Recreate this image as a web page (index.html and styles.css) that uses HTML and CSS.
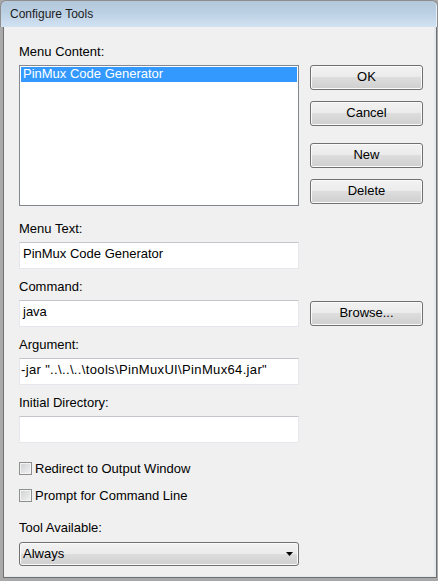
FILE: index.html
```html
<!DOCTYPE html>
<html>
<head>
<meta charset="utf-8">
<title>Configure Tools</title>
<link rel="stylesheet" href="styles.css">
</head>
<body>
<div class="window">
  <div class="titlebar">Configure Tools</div>
  <div class="frame">
    <div class="frame-inner">
      <div class="client">
        <div class="col-left">
          <div class="label">Menu Content:</div>
          <div class="listbox">
            <div class="list-item selected">PinMux Code Generator</div>
          </div>
          <div class="label after-list">Menu Text:</div>
          <div class="textbox">PinMux Code Generator</div>
          <div class="label after-input">Command:</div>
          <div class="textbox">java</div>
          <div class="label after-input">Argument:</div>
          <div class="textbox arg">-jar "..\..\..\tools\PinMuxUI\PinMux64.jar"</div>
          <div class="label after-input">Initial Directory:</div>
          <div class="textbox"></div>
          <div class="check-row first">
            <span class="checkbox"></span>
            <span class="check-label">Redirect to Output Window</span>
          </div>
          <div class="check-row second">
            <span class="checkbox"></span>
            <span class="check-label">Prompt for Command Line</span>
          </div>
          <div class="label after-check">Tool Available:</div>
          <div class="combo">
            <span class="combo-text">Always</span>
            <svg class="combo-arrow" width="7" height="4" viewBox="0 0 7 4"><polygon points="0,0 7,0 3.5,4" fill="#000"/></svg>
          </div>
        </div>
        <div class="col-right">
          <div class="button btn-ok">OK</div>
          <div class="button btn-cancel">Cancel</div>
          <div class="button btn-new">New</div>
          <div class="button btn-delete">Delete</div>
          <div class="button btn-browse">Browse...</div>
        </div>
      </div>
    </div>
  </div>
</div>
</body>
</html>
```
FILE: styles.css
```css
html, body {
  margin: 0;
  padding: 0;
}
body {
  width: 438px;
  height: 581px;
  overflow: hidden;
  background: #a9a9a9;
  font-family: "Liberation Sans", Arial, sans-serif;
  font-size: 13px;
  color: #000;
}
.window {
  width: 438px;
  height: 581px;
  display: flex;
  flex-direction: column;
  box-sizing: border-box;
}
.titlebar {
  height: 27px;
  box-sizing: border-box;
  flex: none;
  border: 1px solid #8e8e8e;
  border-bottom: none;
  border-radius: 6px 6px 0 0;
  background: linear-gradient(#b4c8dc, #bcd0e4 45%, #d1e2f2);
  box-shadow: inset -4px 0 0 -3px #e6eef6;
  padding-left: 9px;
  font-size: 12px;
  line-height: 26px;
  color: #1c1c1c;
}
.frame {
  flex: 1;
  display: flex;
  padding: 0 1px 3px 3px;
  background: #a9a9a9;
}
.frame-inner {
  flex: 1;
  display: flex;
  border: 1px solid #6f6f6f;
  border-top: none;
  background: #e4e9ee;
  padding: 0 2px 1px 0;
}
.client {
  flex: 1;
  display: flex;
  gap: 11px;
  background: #f0f0f0;
  padding: 17px 0 0 15px;
}
.col-left {
  width: 280px;
  display: flex;
  flex-direction: column;
}
.col-right {
  width: 113px;
  display: flex;
  flex-direction: column;
}
.label {
  line-height: 15px;
  height: 15px;
}
.label.after-list { margin-top: 15px; }
.label.after-input { margin-top: 10px; }
.label.after-check { margin-top: 17px; }
.listbox {
  margin-top: 6px;
  height: 141px;
  box-sizing: border-box;
  border: 1px solid #828790;
  background: #fff;
  padding: 1px;
}
.list-item {
  height: 15px;
  line-height: 14px;
  padding-left: 2px;
}
.list-item.selected {
  background: #3399ff;
  color: #fff;
}
.textbox {
  margin-top: 6px;
  height: 27px;
  box-sizing: border-box;
  background: #fff;
  border: 1px solid #e6e7ec;
  border-top-color: #c4c6cc;
  padding: 3px 3px 0 3px;
  line-height: 15px;
  white-space: nowrap;
  overflow: hidden;
}
.textbox.arg {
  padding-left: 1px;
  letter-spacing: 0.35px;
}
.check-row {
  display: flex;
  align-items: center;
  height: 15px;
}
.check-row.first { margin-top: 18px; }
.check-row.second { margin-top: 12px; }
.checkbox {
  width: 13px;
  height: 13px;
  box-sizing: border-box;
  border: 1px solid #8e8f8f;
  background: linear-gradient(135deg, #cfd0d2, #f3f3f3);
  box-shadow: inset 0 0 0 1px #f4f4f4;
  flex: none;
}
.check-label {
  margin-left: 3px;
  line-height: 15px;
}
.combo {
  margin-top: 7px;
  height: 24px;
  box-sizing: border-box;
  border: 1px solid #707070;
  border-radius: 3px;
  background: linear-gradient(#f2f2f2, #ebebeb 50%, #dddddd 50%, #cfcfcf);
  box-shadow: inset 0 0 0 1px #fbfbfb;
  display: flex;
  align-items: center;
  justify-content: space-between;
  padding: 0 5px 0 3px;
}
.combo-text {
  line-height: 15px;
  padding-bottom: 1px;
}
.combo-arrow {
  display: block;
}
.button {
  height: 25px;
  box-sizing: border-box;
  border: 1px solid #707070;
  border-radius: 3px;
  background: linear-gradient(#f2f2f2, #ebebeb 50%, #dddddd 50%, #cfcfcf);
  box-shadow: inset 0 0 0 1px #fbfbfb;
  text-align: center;
  line-height: 22px;
}
.btn-ok { margin-top: 21px; }
.btn-cancel { margin-top: 11px; }
.btn-new { margin-top: 17px; }
.btn-delete { margin-top: 11px; }
.btn-browse { margin-top: 97px; }
```
